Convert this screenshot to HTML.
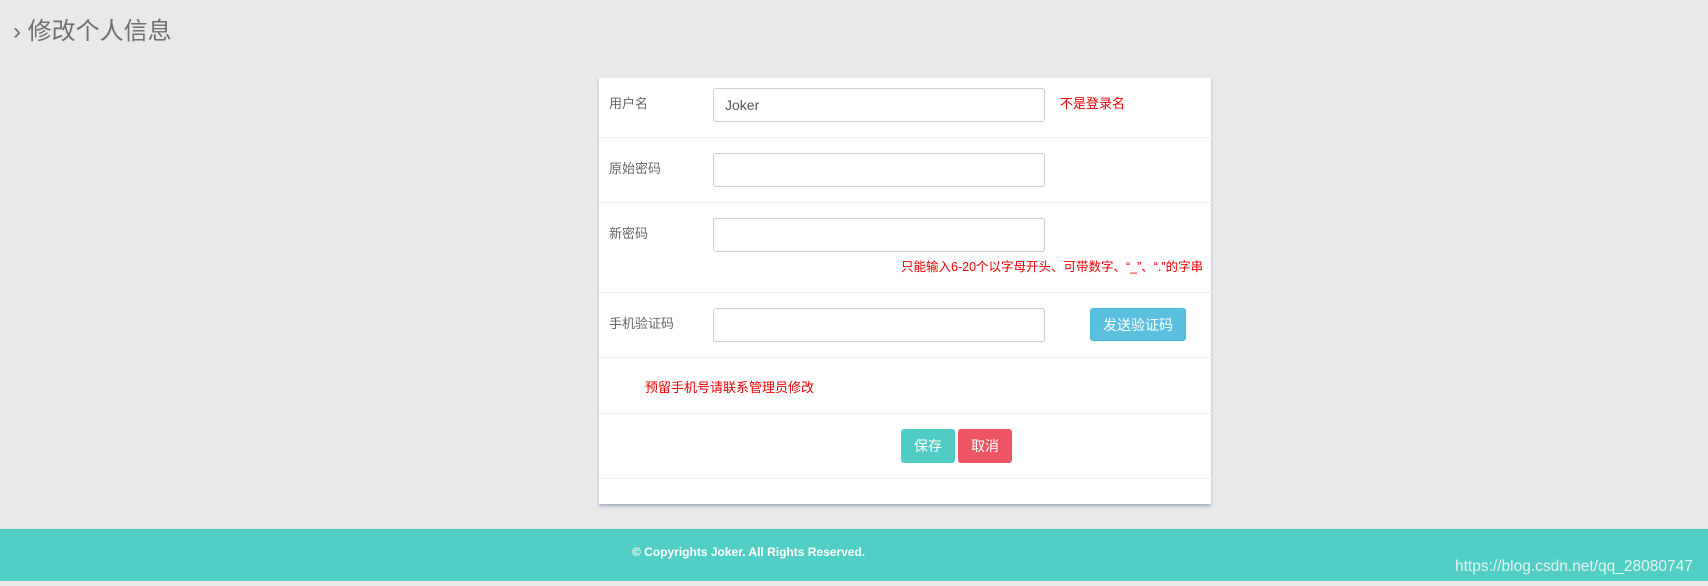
<!DOCTYPE html>
<html><head><meta charset="utf-8"><style>
body{margin:0;width:1708px;height:586px;background:#e9e9e9;font-family:"Liberation Sans","Noto Sans CJK SC",sans-serif;position:relative;overflow:hidden}
.a{position:absolute}
.title{left:13px;top:17px;font-size:24px;color:#707070;line-height:30px}
.card{left:599px;top:78px;width:612px;height:426px;background:#fff;box-shadow:0 2px 3px rgba(120,130,160,.6)}
.sep{left:599px;width:614px;height:1px;background:#eef0f0}
.lbl{left:609px;font-size:13px;color:#666;line-height:16px}
.inp{left:713px;width:330px;height:32px;border:1px solid #ccc;border-radius:3px;background:#fff}
.red{color:#e00;font-size:13px;line-height:16px}
.btn{color:#fff;font-size:14px;text-align:center;border-radius:3px}
</style></head><body>
<div class="a title">› 修改个人信息</div>
<div class="a card"></div>
<div class="a sep" style="top:137px"></div>
<div class="a sep" style="top:202px"></div>
<div class="a sep" style="top:292px"></div>
<div class="a sep" style="top:357px"></div>
<div class="a sep" style="top:413px"></div>
<div class="a sep" style="top:478px"></div>
<div class="a lbl" style="top:96px">用户名</div>
<div class="a lbl" style="top:161px">原始密码</div>
<div class="a lbl" style="top:226px">新密码</div>
<div class="a lbl" style="top:316px">手机验证码</div>
<div class="a inp" style="top:88px"><span style="position:absolute;left:11px;top:8px;font-size:14px;color:#555">Joker</span></div>
<div class="a inp" style="top:153px"></div>
<div class="a inp" style="top:218px"></div>
<div class="a inp" style="top:308px"></div>
<div class="a red" style="left:1060px;top:96px">不是登录名</div>
<div class="a red" style="left:901px;top:259px;font-size:12.5px;white-space:nowrap;width:313px;overflow:hidden">只能输入6-20个以字母开头、可带数字、“_”、“.”的字串</div>
<div class="a btn" style="left:1090px;top:308px;width:96px;height:33px;line-height:33px;background:#5bc0de;border:1px solid #46b8da;box-sizing:border-box">发送验证码</div>
<div class="a red" style="left:645px;top:380px">预留手机号请联系管理员修改</div>
<div class="a btn" style="left:901px;top:429px;width:54px;height:34px;line-height:34px;background:#4fcdc5">保存</div>
<div class="a btn" style="left:958px;top:429px;width:54px;height:34px;line-height:34px;background:#ed5565">取消</div>
<div class="a" style="left:0;top:529px;width:1708px;height:52px;background:#51cec6"></div>
<div class="a" style="left:632px;top:545px;color:#fff;font-size:12px;font-weight:bold">© Copyrights Joker. All Rights Reserved.</div>
<div class="a" style="left:1455px;top:558px;color:#e4f4f4;font-size:15.5px">https://blog.csdn.net/qq_28080747</div>
</body></html>
